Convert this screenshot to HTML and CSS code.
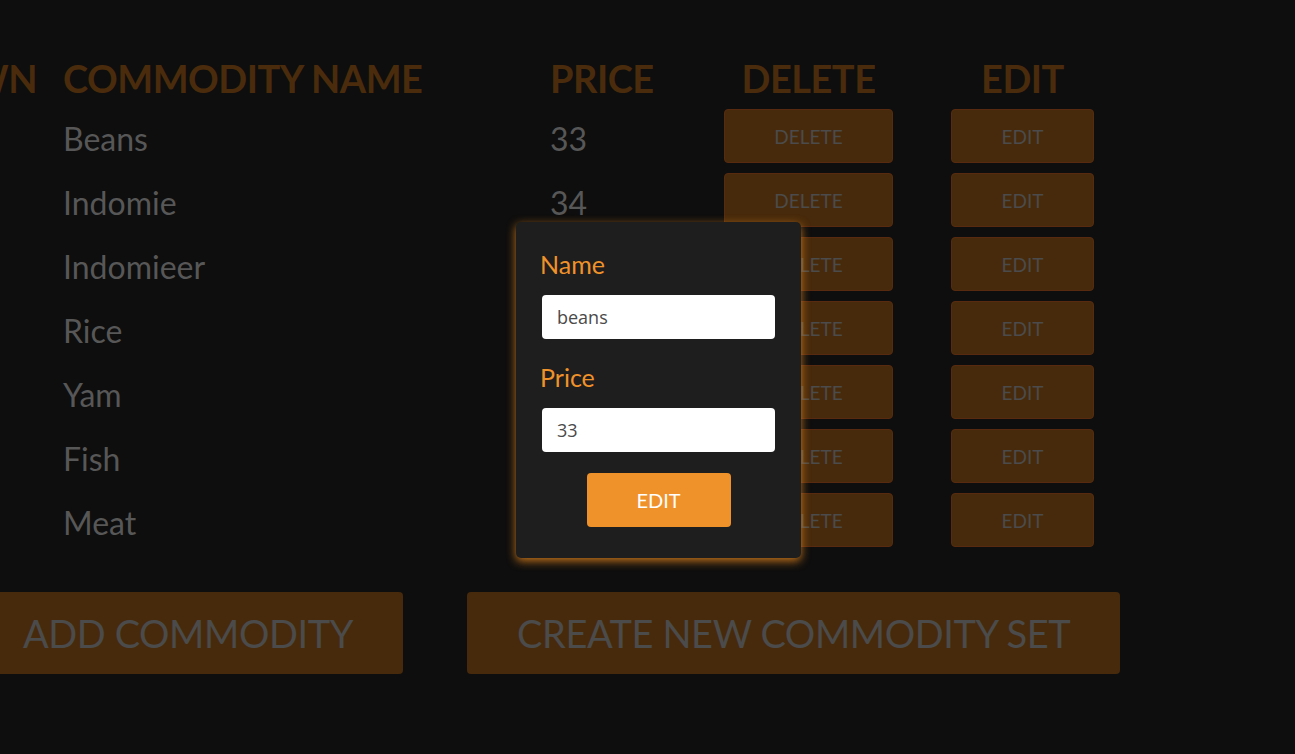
FILE: index.html
```html
<!DOCTYPE html>
<html lang="en">
<head>
<meta charset="utf-8">
<title>Commodities</title>
<link rel="stylesheet" href="styles.css">
</head>
<body>
<main class="page">
  <section class="table">
    <div class="th th-first">DOWN</div>
    <div class="th">COMMODITY NAME</div>
    <div class="th">PRICE</div>
    <div class="th th-center th-delete">DELETE</div>
    <div class="th th-center th-edit">EDIT</div>

    <div class="td"></div><div class="td name">Beans</div><div class="td price">33</div>
    <div class="td"><button class="btn-dim btn-delete">DELETE</button></div><div class="td"><button class="btn-dim btn-edit">EDIT</button></div>

    <div class="td"></div><div class="td name">Indomie</div><div class="td price">34</div>
    <div class="td"><button class="btn-dim btn-delete">DELETE</button></div><div class="td"><button class="btn-dim btn-edit">EDIT</button></div>

    <div class="td"></div><div class="td name">Indomieer</div><div class="td price">35</div>
    <div class="td"><button class="btn-dim btn-delete">DELETE</button></div><div class="td"><button class="btn-dim btn-edit">EDIT</button></div>

    <div class="td"></div><div class="td name">Rice</div><div class="td price">40</div>
    <div class="td"><button class="btn-dim btn-delete">DELETE</button></div><div class="td"><button class="btn-dim btn-edit">EDIT</button></div>

    <div class="td"></div><div class="td name">Yam</div><div class="td price">50</div>
    <div class="td"><button class="btn-dim btn-delete">DELETE</button></div><div class="td"><button class="btn-dim btn-edit">EDIT</button></div>

    <div class="td"></div><div class="td name">Fish</div><div class="td price">60</div>
    <div class="td"><button class="btn-dim btn-delete">DELETE</button></div><div class="td"><button class="btn-dim btn-edit">EDIT</button></div>

    <div class="td"></div><div class="td name">Meat</div><div class="td price">70</div>
    <div class="td"><button class="btn-dim btn-delete">DELETE</button></div><div class="td"><button class="btn-dim btn-edit">EDIT</button></div>
  </section>

  <section class="actions">
    <button class="btn-big">ADD COMMODITY</button>
    <button class="btn-big">CREATE NEW COMMODITY SET</button>
  </section>

  <form class="modal">
    <label class="modal-label" for="name">Name</label>
    <input class="modal-input" id="name" type="text" value="beans">
    <label class="modal-label" for="price">Price</label>
    <input class="modal-input modal-input-last" id="price" type="text" value="33">
    <button class="modal-btn" type="button">EDIT</button>
  </form>
</main>
</body>
</html>
```
FILE: styles.css
```css
* { box-sizing: border-box; }
html, body { margin: 0; padding: 0; }
body {
  background: #0e0e0e;
  font-family: Lato, "Open Sans", sans-serif;
  width: 1295px;
  height: 754px;
  overflow: hidden;
}
.page {
  position: relative;
  height: 754px;
  padding-top: 53px;
}
.table {
  display: grid;
  grid-template-columns: 160px 487px 174px 227px 143px;
  margin-left: -97px;
}
.th {
  font-weight: 700;
  font-size: 38px;
  letter-spacing: -0.5px;
  line-height: 50px;
  color: #4a2b0c;
  white-space: nowrap;
  margin-bottom: 1px;
}
.th-first { text-align: right; padding-right: 26px; }
.th-center { text-align: center; }
.th-delete { width: 169px; }
.td {
  height: 64px;
  display: flex;
  align-items: center;
}
.name, .price {
  font-size: 32px;
  color: #575757;
  padding-top: 5px;
}
.btn-dim {
  height: 54px;
  background: #472a0b;
  border: 1px solid #582a10;
  border-radius: 4px;
  color: #4b4b4b;
  font-family: Lato, sans-serif;
  font-size: 19px;
  padding: 0;
}
.btn-delete { width: 169px; }
.btn-edit { width: 143px; }
.actions {
  display: flex;
  gap: 64px;
  margin-top: 40px;
  margin-left: -27px;
}
.btn-big {
  height: 82px;
  padding: 0 50px;
  background: #472a0b;
  border: none;
  border-radius: 4px;
  color: #4b4b4b;
  font-family: Lato, sans-serif;
  font-size: 38px;
  letter-spacing: -0.4px;
}
.modal {
  position: absolute;
  left: 516px;
  top: 222px;
  width: 285px;
  height: 336px;
  background: #1e1e1e;
  border-radius: 5px;
  box-shadow: 0 3px 10px rgba(240, 140, 30, 0.8);
  padding: 28px 26px 0;
  display: flex;
  flex-direction: column;
}
.modal-label {
  font-size: 25px;
  line-height: 29px;
  color: #f0922a;
  margin-bottom: 16px;
  margin-left: -2px;
}
.modal-input {
  width: 233px;
  height: 44px;
  border: none;
  border-radius: 4px;
  background: #fff;
  padding: 0 15px;
  font-family: "Open Sans", sans-serif;
  font-size: 18px;
  color: #4a4a4a;
  margin-bottom: 24px;
  outline: none;
}
.modal-input-last { margin-bottom: 21px; }
.modal-btn {
  align-self: center;
  width: 144px;
  height: 54px;
  background: #f0922a;
  border: none;
  border-radius: 4px;
  color: #fff;
  font-family: Lato, sans-serif;
  font-size: 20px;
}
```
